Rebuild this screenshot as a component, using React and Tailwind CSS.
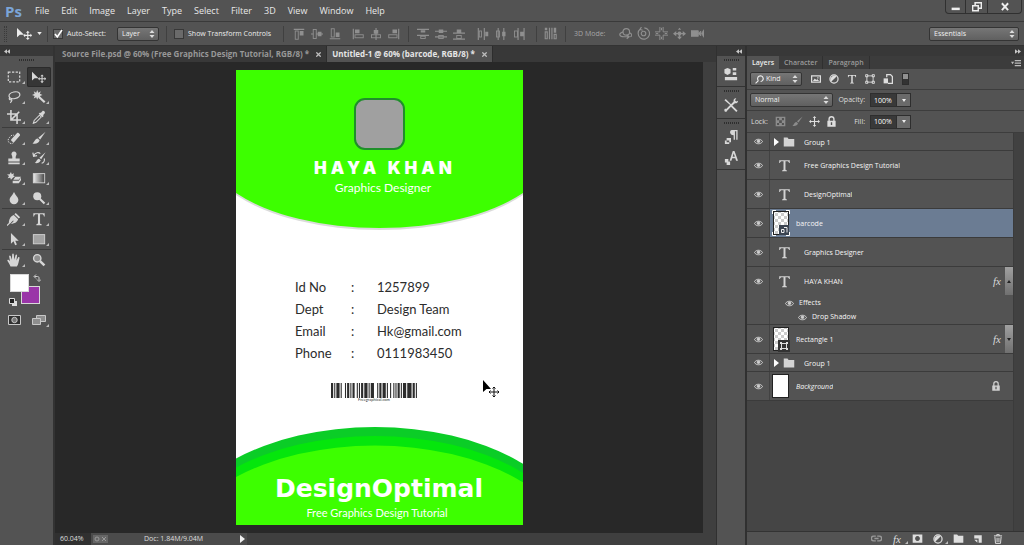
import { clsx } from 'clsx';

const UI_FONT = "font-['Open_Sans','Noto_Sans',sans-serif]";

// ---------- Icons ----------
const Svg = ({ size = 14, className, children }) => (
  <svg viewBox="0 0 16 16" width={size} height={size} fill="currentColor" className={clsx('shrink-0', className)} aria-hidden="true">
    {children}
  </svg>
);

const line = { fill: 'none', stroke: 'currentColor', strokeWidth: 1.4 };

const toolIcons = {
  marquee: <rect x="1.500" y="2.500" width="13" height="11" {...line} strokeDasharray="2.6 1.6" />,
  move: (
    <>
      <path d="M0 2v10l3-2.600h4.500z" />
      <path d="M11.500 5l2 2.200h-1.400v2.200h2.200V8l1.900 2-1.900 2v-1.400h-2.200v2.200h1.400l-2 2.200-2-2.200h1.400v-2.200H8.700V12l-1.900-2 1.900-2v1.400h2.200V7.200H9.500z" />
    </>
  ),
  lasso: (
    <>
      <ellipse cx="8.500" cy="6" rx="6.300" ry="3.800" {...line} transform="rotate(-12 8.500 6)" />
      <path d="M3.500 8.500c-1.600 1.200-1 3 .8 2.600s1.600 1.600-.6 3.400" {...line} />
    </>
  ),
  wand: (
    <>
      <path d="M6 0l1.200 3L10 1.500 9 4.400l3 1.200-3 1.200 1 2.800-2.800-1.400L6 11 4.800 8.200 2 9.600l1-2.800L0 5.600l3-1.200L2 1.500 4.800 3z" />
      <path d="M8 8l6.500 6" stroke="currentColor" strokeWidth="2.600" />
    </>
  ),
  crop: <path d="M4.500 0v11.500H16M0 4.500h11.500V16M5 11L14 2" {...line} strokeWidth="1.800" />,
  dropper: (
    <>
      <path d="M10 3.500l1.800-2.200c1-1.300 3.800.8 2.800 2.400L12.600 6l.8.900-1.500 1.400L7.700 4.200 9.200 2.800z" />
      <path d="M8.500 6l2 2-6 6-3 1.200L2.500 12z" {...line} strokeWidth="1.200" />
    </>
  ),
  heal: (
    <>
      <path d="M5 9.500l6.500-7.300c1-1.200 4.300 1.700 3.300 3L8.300 12.500c-1.200 1.200-4.500-1.500-3.300-3z" />
      <path d="M7.600 13.200C4 16.500-.5 12 2 8.500S6 4 8 5" {...line} strokeWidth="1.100" strokeDasharray="1.600 1.300" />
    </>
  ),
  brush: (
    <>
      <path d="M15.500.8L9.400 9.600 7.300 7.800z" />
      <path d="M6.500 8.600l2.200 2C8 14 4.500 15 .5 14.200 2.800 13.200 3 9 6.500 8.600z" />
    </>
  ),
  stamp: <path d="M8 .5a3 3 0 0 1 2.700 4.200C9.800 6.400 9.800 7.500 10 8.500h4.500V12h-13V8.500H6c.2-1 .2-2.100-.7-3.800A3 3 0 0 1 8 .500zM1.500 13h13v2h-13z" />,
  history: (
    <>
      <path d="M15.500 1.500l-5 7.800-2-1.600zM8 8.800l2 1.800c-1 3-4 3.800-7 3.200 2-1 2.400-4.600 5-5z" />
      <path d="M2 5.500C4 1 8 1.500 9.500 3M1 1.800l.8 4.200 4-.8M14 8.500c1 3-1 5.200-3 5.500" {...line} />
    </>
  ),
  eraser: (
    <>
      <path d="M4.500 1l1 2.600L8 2.500 7.200 5 9 6 7 7.400 4.500 10 3.700 7.600.8 8.200 2.300 5.700 0 4l3-.2z" />
      <path d="M9.500 6.500H16L13.500 10H7.200zM6.500 11h7L16 7.500v3.200L13.500 14h-7z" />
    </>
  ),
  blur: <path d="M8 1c1.500 3.500 5 6 5 9.300a5 4.800 0 0 1-10 0C3 7 6.500 4.500 8 1z" />,
  dodge: (
    <>
      <circle cx="6" cy="6" r="4.600" />
      <path d="M8.800 8.800l5.500 5.500" stroke="currentColor" strokeWidth="2.400" />
    </>
  ),
  pen: (
    <>
      <path d="M10 1l5 5-1.600 1.500-5-5zM7.700 3.300l5 5c-1 3.200-3.200 4.700-8.200 5.400l3.200-3.300-.8-.8L3.500 13 2 12c.6-4.800 2.500-7.500 5.700-8.700z" />
      <path d="M0 15.500l4-4" {...line} />
    </>
  ),
  type: <path d="M1.500 1.500h13V5h-.9c-.3-1.700-1-2.300-2.600-2.300H9.200v10c0 1 .5 1.300 1.800 1.300v1H5v-1c1.300 0 1.800-.3 1.800-1.300v-10H5C3.400 2.700 2.700 3.300 2.400 5h-.9z" />,
  path: <path d="M4.500 1v12.500l3-2.800 1.800 4.500 2-.8-1.900-4.400h4z" />,
  shape: <rect x="1.500" y="3" width="13" height="10.500" fill="#a3a3a3" stroke="currentColor" />,
  hand: <path d="M4 15.500C3 12.500 1 10.500.3 8.400c.3-1.200 1.500-1 3.200 1L2.400 3.800c.2-1.200 1.500-1.200 1.900 0l1.300 4 .3-6.200c.3-1.300 1.700-1.300 1.900 0l.5 6 1.500-5.400c.5-1 1.700-.7 1.700.4l-.7 5.900 2-3.600c.8-.8 1.700-.1 1.500.8-.7 3.500-1.200 7-3 9.800z" />,
  zoom: (
    <>
      <circle cx="6" cy="6" r="4.200" fill="#8f8f8f" stroke="currentColor" strokeWidth="1.600" />
      <path d="M9.200 9.200l5 5" stroke="currentColor" strokeWidth="2.800" />
    </>
  ),
};

const GradientIcon = () => (
  <Svg size={14}>
    <defs>
      <linearGradient id="tool-gradient">
        <stop offset="0" stopColor="#eeeeee" />
        <stop offset="1" stopColor="#444444" />
      </linearGradient>
    </defs>
    <rect x="1.500" y="3" width="13" height="10.500" fill="url(#tool-gradient)" stroke="currentColor" />
  </Svg>
);

const UpDown = () => (
  <svg viewBox="0 0 6 8" width="6" height="8" fill="currentColor" className="pointer-events-none absolute top-1/2 right-1 -translate-y-1/2" aria-hidden="true">
    <path d="M3 0l2.500 3h-5zM3 8L.5 5h5z" />
  </svg>
);

const MoreMark = ({ className }) => (
  <svg viewBox="0 0 3 3" width="3" height="3" className={clsx('absolute', className)} fill="#bbbbbb" aria-hidden="true">
    <path d="M3 0v3H0z" />
  </svg>
);

const EyeIcon = () => (
  <svg viewBox="0 0 18 12" width="9" height="7" className="shrink-0 text-[#d0d0d0]" fill="none" stroke="currentColor" strokeWidth="2" aria-hidden="true">
    <path d="M1 6c3-6 13-6 16 0-3 6-13 6-16 0z" />
    <circle cx="9" cy="5.500" r="2.600" fill="currentColor" />
  </svg>
);

const FolderIcon = ({ size = 12 }) => (
  <Svg size={size}>
    <path d="M1 2h5l1.500 2H15v10H1z" />
  </Svg>
);

const LockIcon = ({ size = 10 }) => (
  <Svg size={size}>
    <path d="M4.500 8V4.500a3.500 3.500 0 0 1 7 0V8" fill="none" stroke="currentColor" strokeWidth="2" />
    <path fillRule="evenodd" d="M2 7h12v8.500H2zM7 9v4h2V9z" />
  </Svg>
);

const FxIcon = ({ className }) => (
  <span className={clsx("font-['Liberation_Serif',serif] text-[11px] leading-3 italic", className)}>fx</span>
);

// ---------- Shared controls ----------
const Select = ({ label, value, className, selectClass }) => (
  <span className={clsx('relative block text-[#dcdcdc]', className)}>
    <select
      aria-label={label}
      defaultValue={value}
      className={clsx(
        'block h-[14px] w-full appearance-none rounded-xs border border-[#343434] bg-linear-to-b from-[#767676] to-[#606060] pr-3 text-[7px] leading-3 font-medium text-[#f0f0f0] outline-none',
        selectClass
      )}
    >
      <option>{value}</option>
    </select>
    <UpDown />
  </span>
);

const Checkbox = ({ id, label, checked }) => (
  <span className="flex items-center gap-1">
    <span className="relative block h-[10px] w-[10px]">
      <input
        id={id}
        type="checkbox"
        defaultChecked={checked}
        className="peer block h-[10px] w-[10px] appearance-none border border-[#383838] bg-[#6a6a6a]"
      />
      <svg viewBox="0 0 10 10" className="pointer-events-none absolute inset-0 hidden text-white peer-checked:block" fill="none" stroke="currentColor" strokeWidth="1.600">
        <path d="M2 5l2.300 3L9 1" />
      </svg>
    </span>
    <label htmlFor={id} className="text-[7px] leading-3 font-medium whitespace-nowrap">{label}</label>
  </span>
);

const Grip = () => (
  <div className="flex h-[11px] items-start justify-center pt-[3px]">
    <span className="block h-[2px] w-[15px] border-t border-b border-dotted border-[#2e2e2e]" />
  </div>
);

const Separator = () => <span className="h-4 w-px shrink-0 bg-[#404040]" />;

// ---------- Menu bar ----------
const menus = ['File', 'Edit', 'Image', 'Layer', 'Type', 'Select', 'Filter', '3D', 'View', 'Window', 'Help'];

const MenuBar = () => (
  <header className="flex h-[22px] shrink-0 items-center border-b border-[#3a3a3a] bg-[#535353]">
    <span className="ml-[5px] w-[24px] text-[15px] leading-5 font-bold text-[#7ba5d8]">Ps</span>
    <nav className="flex">
      {menus.map((menu) => (
        <button key={menu} className="px-[6px] text-[9px] leading-4 font-medium text-[#e8e8e8]">{menu}</button>
      ))}
    </nav>
    <div className="mr-[2px] ml-auto flex self-start text-[#eeeeee]">
      <button aria-label="Minimize" className="flex h-[14px] w-[21px] items-center justify-center rounded-bl-sm border border-t-0 border-[#303030]">
        <Svg size={10}><path d="M1 9h13v4H1z" /></Svg>
      </button>
      <button aria-label="Restore" className="flex h-[14px] w-[21px] items-center justify-center border-b border-[#303030]">
        <Svg size={10}><path d="M5 5V1h10v9h-4M1 6h9v8H1z" fill="none" stroke="currentColor" strokeWidth="2.400" /></Svg>
      </button>
      <button aria-label="Close" className="flex h-[14px] w-[35px] items-center justify-center rounded-br-sm border border-t-0 border-[#303030]">
        <Svg size={10}><path d="M3 2l10 11M13 2L3 13" stroke="currentColor" strokeWidth="3" /></Svg>
      </button>
    </div>
  </header>
);

// ---------- Options bar ----------
const alignGroups = [
  [
    { name: 'Align top edges', d: 'M1 1h14v1.500H1zM9 4h5v6H9z', box: [3, 4, 4, 11] },
    { name: 'Align vertical centers', d: 'M0 7.300h3v1.500H0zM7 7.300h2v1.500H7zM9 5h5v6H9zM14 7.300h2v1.500h-2z', box: [3, 2, 4, 12] },
    { name: 'Align bottom edges', d: 'M1 13.500h14V15H1zM9 6h5v6H9z', box: [3, 1, 4, 11] },
  ],
  [
    { name: 'Align left edges', d: 'M1 1h1.500v14H1zM4 2h6v5H4z', box: [4, 9, 11, 4] },
    { name: 'Align horizontal centers', d: 'M7.300 0h1.500v16H7.300zM5 2.500h6v5H5z', box: [2, 9, 12, 4] },
    { name: 'Align right edges', d: 'M13.500 1H15v14h-1.500zM6 2h6v5H6z', box: [1, 9, 11, 4] },
  ],
  [
    { name: 'Distribute top edges', d: 'M0 1h16v1.500H0zM0 9h16v1.500H0zM5 3h6v3H5z', box: [5, 11, 6, 3] },
    { name: 'Distribute vertical centers', d: 'M0 3.500h16V5H0zM0 11h16v1.500H0zM5 2h6v4.500H5z', box: [5, 10, 6, 4] },
    { name: 'Distribute bottom edges', d: 'M0 6h16v1.500H0zM0 14h16v1.500H0zM5 2h6v4H5z', box: [5, 10, 6, 4] },
  ],
  [
    { name: 'Distribute left edges', d: 'M1 0h1.500v16H1zM9 0h1.500v16H9zM11 5h4v6h-4z', box: [3, 4, 3, 8] },
    { name: 'Distribute horizontal centers', d: 'M3.500 0H5v16H3.500zM11 0h1.500v16H11zM9.500 5H14v6H9.500z', box: [2, 4, 4, 8] },
    { name: 'Distribute right edges', d: 'M6 0h1.500v16H6zM14 0h1.500v16H14zM9.500 5H14v6H9.500z', box: [2, 4, 4, 8] },
  ],
];

const AlignGroup = ({ items }) => (
  <div className="flex text-[#8f8f8f]">
    {items.map(({ name, d, box: [x, y, width, height] }) => (
      <button key={name} aria-label={name} className="flex w-[18px] justify-center">
        <Svg size={12}>
          <path d={d} />
          <rect x={x} y={y} width={width} height={height} {...line} strokeWidth="1.200" />
        </Svg>
      </button>
    ))}
  </div>
);

const modes3d = [
  {
    name: 'Rotate 3D',
    icon: (
      <>
        <circle cx="9" cy="6" r="4" {...line} />
        <path d="M5 6C-1 8 0 12 6 12h6M9.500 9.500l3 2.500-3 2.500M13 7c4 2 3 4 1 5" {...line} />
      </>
    ),
  },
  {
    name: 'Roll 3D',
    icon: (
      <>
        <circle cx="8" cy="8" r="2.800" {...line} />
        <path d="M4 2.500A7 7 0 1 0 9 1M5.500 0L3.600 3l3.400 1" {...line} />
      </>
    ),
  },
  { name: 'Drag 3D', icon: <path d="M6 0v6H0M10 0v6h6M6 16v-6H0M10 16v-6h6M8 1v3M8 12v3M1 8h3M12 8h3" {...line} strokeWidth="1.200" /> },
  { name: 'Slide 3D', icon: <path d="M8 5.500a2.500 2.500 0 0 1 2.400 1.800H12V5l4 3.200-4 3.200V9h-1.700L9 10.500V12h2l-3 3.500L5 12h2v-1.500L5.700 9H4v2.400L0 8.200 4 5v2.300h1.600A2.500 2.500 0 0 1 8 5.500zM8 1l2 2.500H6z" /> },
  { name: 'Scale 3D', icon: <path d="M0 4.500h9v7H0zM9 8l3-3v6zM16 3l-3 5 3 5" stroke="currentColor" /> },
];

const OptionsBar = () => (
  <div className="flex h-6 shrink-0 items-center border-b border-[#333333] bg-[#535353] text-[#ececec]">
    <span className="ml-1 h-4 w-[3px] border-x border-dotted border-[#3a3a3a]" />
    <button aria-label="Move tool presets" className="ml-[10px] flex items-center gap-[5px]">
      <Svg size={15}>{toolIcons.move}</Svg>
      <svg viewBox="0 0 6 4" width="5" height="3" fill="currentColor"><path d="M0 0h6L3 4z" /></svg>
    </button>
    <span className="ml-[5px] flex"><Separator /></span>
    <div className="ml-[5px] flex w-[64px] items-center"><Checkbox id="auto-select" label="Auto-Select:" checked /></div>
    <Select label="Auto-select target" value="Layer" className="w-[42px]" selectClass="pl-1" />
    <span className="mr-[7px] ml-[7px] flex"><Separator /></span>
    <div className="w-[109px]"><Checkbox id="transform-controls" label="Show Transform Controls" /></div>
    <Separator />
    <div className="ml-[6px] flex gap-[5px]">
      <AlignGroup items={alignGroups[0]} />
      <AlignGroup items={alignGroups[1]} />
    </div>
    <span className="mx-[5px] flex"><Separator /></span>
    <div className="flex gap-[6px]">
      <AlignGroup items={alignGroups[2]} />
      <AlignGroup items={alignGroups[3]} />
    </div>
    <span className="mr-[7px] ml-[8px] flex"><Separator /></span>
    <button aria-label="Auto-align layers" className="text-[#8f8f8f]">
      <Svg size={13}>
        <path d="M1 1h3v3H1zM6 1h1.500v14H6zM12 1h3v6h-3zM9 1h1.500v14H9z" />
        <path d="M1.500 6v8.500H4V6zM12.500 9v5.500H15V9z" {...line} />
      </Svg>
    </button>
    <span className="mr-2 ml-[8px] flex"><Separator /></span>
    <span className="w-[42px] text-[7px] leading-3 font-medium text-[#a5a5a5]">3D Mode:</span>
    <div className="flex text-[#8f8f8f]">
      {modes3d.map((mode) => (
        <button key={mode.name} aria-label={mode.name} className="flex w-[18px] justify-center">
          <Svg size={13}>{mode.icon}</Svg>
        </button>
      ))}
    </div>
    <Select label="Workspace" value="Essentials" className="mr-[5px] ml-auto w-[90px]" selectClass="pl-1" />
  </div>
);

// ---------- Toolbox ----------
const toolGroups = [
  ['marquee', 'move', 'lasso', 'wand', 'crop', 'dropper'],
  ['heal', 'brush', 'stamp', 'history', 'eraser', 'gradient', 'blur', 'dodge'],
  ['pen', 'type', 'path', 'shape'],
  ['hand', 'zoom'],
];

const ToolButton = ({ name, active }) => (
  <button
    aria-label={name}
    className={clsx('relative flex h-5 items-center justify-center text-[#d6d6d6]', active && 'rounded-xs bg-[#363636] shadow-[inset_0_0_0_1px_#2b2b2b]')}
  >
    {name === 'gradient' ? <GradientIcon /> : <Svg size={14}>{toolIcons[name]}</Svg>}
    {!active && name !== 'zoom' && <MoreMark className="right-[2px] bottom-[3px]" />}
  </button>
);

const Toolbox = () => (
  <aside className="flex w-[55px] shrink-0 flex-col border-r-2 border-[#333333] bg-[#535353]">
    <div className="flex h-[10px] items-center bg-[#383838] pl-1">
      <svg viewBox="0 0 8 6" width="6" height="5" fill="#c8c8c8"><path d="M4 0v6L0 3zM8 0v6L4 3z" /></svg>
    </div>
    <Grip />
    <div className="px-[2px]">
      {toolGroups.map((group, i) => (
        <div key={group[0]} className={clsx('grid grid-cols-2', i < 3 && 'border-b border-[#3c3c3c]')}>
          {group.map((name) => (
            <ToolButton key={name} name={name} active={name === 'move'} />
          ))}
        </div>
      ))}
    </div>
    <div className="relative h-10">
      <button aria-label="Background color" className="absolute top-4 left-[21px] h-[18px] w-[19px] border border-[#d8d8d8] bg-[#9a35a8]" />
      <button aria-label="Foreground color" className="absolute top-1 left-[10px] h-[18px] w-[19px] border border-[#d8d8d8] bg-white" />
      <button aria-label="Switch colors" className="absolute top-1 left-[33px] text-[#cfcfcf]">
        <Svg size={8}><path d="M3 5h6c2 0 3 1 3 3v5M6 1L2 5l4 4M8 11l4 4 4-4" {...line} strokeWidth="2" /></Svg>
      </button>
      <button aria-label="Default colors" className="absolute top-[28px] left-[9px]">
        <svg viewBox="0 0 8 8" width="8" height="8"><path d="M3 3h5v5H3z" fill="#ddd" /><path d="M.5.500h5v5h-5z" fill="#222" stroke="#ddd" /></svg>
      </button>
    </div>
    <div className="grid grid-cols-2 px-[2px] text-[#c8c8c8]">
      <button aria-label="Quick mask" className="flex h-5 items-center justify-center">
        <svg viewBox="0 0 13 10" width="13" height="10"><path d="M.5.500h12v9H.5z" fill="#303030" stroke="currentColor" /><circle cx="6.500" cy="5" r="2.700" fill="#777" stroke="currentColor" /></svg>
      </button>
      <button aria-label="Screen mode" className="relative flex h-5 items-center justify-center">
        <svg viewBox="0 0 14 10" width="14" height="10" fill="#8e8e8e" stroke="currentColor"><path d="M4.500.500h9v6h-9z" /><path d="M.5 3.500h8v6h-8z" /></svg>
        <MoreMark className="right-[2px] bottom-[3px]" />
      </button>
    </div>
  </aside>
);

// ---------- Document ----------
const documents = [
  { title: 'Source File.psd @ 60% (Free Graphics Design Tutorial, RGB/8) *' },
  { title: 'Untitled-1 @ 60% (barcode, RGB/8) *', active: true },
];

const details = [
  ['Id No', '1257899'],
  ['Dept', 'Design Team'],
  ['Email', 'Hk@gmail.com'],
  ['Phone', '0111983450'],
];

// bar widths and the gap that follows each one
const bars = [2, 1, 1, 1, 3, 1, 1, 3, 1, 1, 2, 1, 1, 1, 2, 2, 1, 1, 1, 1, 2, 1, 3, 1, 1, 1, 3, 3, 1, 1, 2, 1, 3, 1, 1, 2, 1, 2, 1, 1, 1, 1, 2, 1, 1, 1, 3, 1, 4, 1, 2, 1, 1, 1];

const Barcode = () => {
  let x = 0;
  const rects = [];
  bars.forEach((w, i) => {
    if (i % 2 === 0) rects.push(<rect key={x} x={x} width={w} height="15" />);
    x += w;
  });
  return (
    <svg viewBox={`0 0 ${x} 15`} preserveAspectRatio="none" className="block h-[15px] w-[87px]" fill="#2c2c2c" aria-label="Barcode">
      {rects}
    </svg>
  );
};

const IdCard = () => (
  <article className="relative h-[455px] w-[287px] shrink-0 overflow-hidden bg-white font-['Lato',sans-serif]">
    <svg viewBox="0 0 287 455" className="absolute inset-0 h-full w-full" aria-hidden="true">
      <path d="M0 0h287v124A175 82 0 0 1 0 124z" fill="#888888" opacity="0.300" transform="translate(0 1)" />
      <path d="M0 0h287v123A175 82 0 0 1 0 123z" fill="#3dff00" />
      <ellipse cx="139" cy="469.500" rx="200" ry="112.500" fill="#0bcd27" />
      <ellipse cx="139" cy="478.500" rx="200" ry="112.500" fill="#05e60c" />
      <ellipse cx="139" cy="488" rx="200" ry="112.500" fill="#3dff00" />
    </svg>
    <div className="relative flex h-full flex-col items-center text-white">
      <div className="mt-[28px] h-[52px] w-[51px] rounded-[11px] border-2 border-[#1f8f2b] bg-[#a0a0a0]" />
      <h1 className="mt-2 pl-3 font-['Inter',sans-serif] text-[17px] leading-5 font-black tracking-[4px]">HAYA KHAN</h1>
      <p className="pl-2 text-[12px] leading-5">Graphics Designer</p>
      <table className="mt-[78px] ml-1 text-left text-[13px] leading-[22px] text-[#2c2c2c]">
        <tbody>
          {details.map(([label, value]) => (
            <tr key={label}>
              <th className="w-[56px] p-0 font-normal">{label}</th>
              <td className="w-[26px] p-0">:</td>
              <td className="w-[90px] p-0">{value}</td>
            </tr>
          ))}
        </tbody>
      </table>
      <div className="mt-[19px] mr-[10px] flex flex-col items-center text-[#333333]">
        <Barcode />
        <span className="text-[4px] leading-1">Freegraphical.com</span>
      </div>
      <h2 className="mt-auto font-['DejaVu_Sans',sans-serif] text-[25px] leading-8 font-bold">DesignOptimal</h2>
      <p className="mb-1 pr-1 text-[11px] leading-4">Free Graphics Design Tutorial</p>
    </div>
    <svg viewBox="0 0 16 20" width="16" height="20" className="absolute top-[309px] left-[247px]" aria-hidden="true">
      <path d="M0 1v12l3.500-3H8z" />
      <path d="M11 8v10M6 13h10M9.500 9.500L11 8l1.500 1.500M9.500 16.500L11 18l1.500-1.500M7.500 11.500L6 13l1.500 1.500M14.500 11.500L16 13l-1.500 1.500" fill="none" stroke="#111" />
    </svg>
  </article>
);

const DocumentArea = () => (
  <main className="flex min-w-0 flex-1 flex-col bg-[#282828]">
    <div className="flex h-4 shrink-0 bg-[#383838]">
      {documents.map((doc) => (
        <div
          key={doc.title}
          className={clsx(
            'flex items-center gap-[7px] border-r border-[#2d2d2d] pr-[5px] text-[8px] font-bold',
            doc.active ? 'bg-[#535353] pl-[5px] text-[#e6e6e6]' : 'pl-[7px] text-[#979797]'
          )}
        >
          <button className="leading-4 whitespace-nowrap">{doc.title}</button>
          <button aria-label={`Close ${doc.title}`} className="text-[#bdbdbd]">
            <Svg size={5}><path d="M1 1l14 14M15 1L1 15" stroke="currentColor" strokeWidth="4" /></Svg>
          </button>
        </div>
      ))}
    </div>
    <div className="flex min-h-0 flex-1">
      <div className="flex min-w-0 flex-1 items-center justify-center overflow-hidden">
        <IdCard />
      </div>
      <div className="w-[13px] shrink-0 bg-[#3f3f3f]" />
    </div>
    <footer className="flex h-3 shrink-0 items-center bg-[#3f3f3f] text-[7px] text-[#dedede]">
      <span className="w-[36px] self-stretch bg-[#303030] pl-[5px] leading-3">60.04%</span>
      <div className="flex w-[156px] items-center self-stretch bg-[#4b4b4b] pl-[2px]">
        <svg viewBox="0 0 15 8" width="15" height="8" fill="none" stroke="#999"><path d="M0 0h15v8H0z" fill="#666" stroke="none" /><circle cx="4" cy="4" r="2" /><path d="M9 2l4 4M13 2L9 6" /></svg>
        <span className="ml-[36px] leading-3">Doc: 1.84M/9.04M</span>
        <button aria-label="Document info" className="mr-[2px] ml-auto">
          <svg viewBox="0 0 5 8" width="5" height="8" fill="#f0f0f0"><path d="M0 0l5 4-5 4z" /></svg>
        </button>
      </div>
    </footer>
  </main>
);

// ---------- Collapsed dock ----------
const dockGroups = [
  {
    height: 'h-[31px]',
    icons: [{ name: 'Properties', d: 'M4 1l3.500 1.500v4.500L4 9 .5 7V2.500zM10 1h4v3h-4zM10 6h4v3h-4zM1 11.500h14v3.500H1z' }],
  },
  {
    height: 'h-[32px]',
    icons: [{ name: 'Tool presets', d: 'M2 1l6 6 3-3c-.5-2 1-4 3-3.500l-1.500 2 1.500 1.500 2-1c0 2.500-2 3.500-3.500 3L9.500 8.500l6 6L14 16 8 10l-4.500 4.500c0 1.500-2.500 2-3 0s1-2.500 2-2L7 8 .5 2.500z' }],
  },
  {
    height: 'h-[51px]',
    icons: [
      { name: 'Paragraph styles', d: 'M9 0h6.500v11H14V1.500h-1.500V11H11V6C6 6 6 0 9 0zM3 9h5v5H3zM1 12h5v4H1z' },
      { name: 'Character styles', d: 'M10 0h2l4 11h-2.200l-.9-2.700H9.400L8.500 11H6.400zM9.900 6.600h2.500L11.100 2.700zM1 9h4v3h2v4H3v-3H1z' },
    ],
  },
];

const Dock = () => (
  <aside className="flex w-[31px] shrink-0 flex-col border-r-2 border-l-1 border-[#303030] bg-[#535353]">
    <div className="flex h-[10px] items-center justify-end bg-[#383838] pr-[3px]">
      <svg viewBox="0 0 8 6" width="6" height="5" fill="#c8c8c8"><path d="M4 0v6L0 3zM8 0v6L4 3z" /></svg>
    </div>
    {dockGroups.map((group) => (
      <div key={group.icons[0].name} className={clsx('border-b border-[#333333]', group.height)}>
        <div className="-mb-1"><Grip /></div>
        {group.icons.map((icon) => (
          <button key={icon.name} aria-label={icon.name} className="flex h-[21px] w-full items-center justify-center text-[#d8d8d8]">
            <Svg size={14}><path fillRule="evenodd" d={icon.d} /></Svg>
          </button>
        ))}
      </div>
    ))}
  </aside>
);

// ---------- Layers panel ----------
const filterIcons = [
  { name: 'Pixel layers', icon: <path fillRule="evenodd" d="M0 2h16v12H0zM2 4v8h12V4zM3 11l3-4 2.500 2.500L10 8l3 3zM10 5h2v2h-2z" /> },
  { name: 'Adjustment layers', icon: <><circle cx="8" cy="8" r="6.500" {...line} strokeWidth="2" /><path d="M12.500 3.500A6.500 6.500 0 0 0 3.500 12.500z" /></> },
  { name: 'Type layers', icon: toolIcons.type },
  { name: 'Shape layers', icon: <path d="M3 3h10v10H3zM1 1h3.500v3.500H1zM11.500 1H15v3.500h-3.500zM1 11.500h3.500V15H1zM11.500 11.500H15V15h-3.500z" {...line} /> },
  { name: 'Smart objects', icon: <><path d="M6 5V1h6l3 3v11H8" {...line} strokeWidth="2" /><path d="M1 7h7v8H1z" /></> },
];

const lockIcons = [
  { name: 'Lock transparent pixels', dim: true, icon: <path fillRule="evenodd" d="M1 1h14v14H1zM3 3v3h3V3zM10 3v3h3V3zM6 6v4h4V6zM3 10v3h3v-3zM10 10v3h3v-3z" /> },
  { name: 'Lock image pixels', dim: true, icon: toolIcons.brush },
  { name: 'Lock position', icon: <path d="M8 0l2.500 3H8.800v4.200H13V5.500L16 8l-3 2.500V8.800H8.800V13h1.700L8 16l-2.500-3h1.700V8.800H3v1.700L0 8l3-2.500v1.700h4.200V3H5.500z" /> },
];

const layers = [
  { name: 'Group 1', kind: 'group' },
  { name: 'Free Graphics Design Tutorial', kind: 'type' },
  { name: 'DesignOptimal', kind: 'type' },
  { name: 'barcode', kind: 'smart', selected: true },
  { name: 'Graphics Designer', kind: 'type' },
  { name: 'HAYA KHAN', kind: 'type', fx: 'open', effects: ['Drop Shadow'] },
  { name: 'Rectangle 1', kind: 'shape', fx: 'closed' },
  { name: 'Group 1', kind: 'group' },
  { name: 'Background', kind: 'background', locked: true },
];

const Thumbnail = ({ kind }) => {
  if (kind === 'background') return <span className="block h-[24px] w-[17px] border border-[#222222] bg-white" />;
  return (
    <svg viewBox="0 0 18 26" width="18" height="26" aria-hidden="true">
      <defs>
        <pattern id="checker" width="6" height="6" patternUnits="userSpaceOnUse">
          <path d="M0 0h6v6H0z" fill="#ffffff" />
          <path d="M0 0h3v3H0zM3 3h3v3H3z" fill="#cccccc" />
        </pattern>
      </defs>
      {kind === 'smart' && <path d="M.5 4V.500H4M14 .5h3.500V4M.5 22v3.500H4M14 25.500h3.500V22" fill="none" stroke="#ffffff" />}
      <rect x="1.500" y="1.500" width="15" height="23" fill="url(#checker)" stroke="#222222" />
      {kind === 'smart' ? (
        <>
          <path d="M7 15h10v10H7z" fill="#3a4350" />
          <path d="M9.500 22.500v-3H12v3zM12 17.500h3v5" fill="none" stroke="#eeeeee" />
        </>
      ) : (
        <>
          <path d="M6 14h12v12H6z" fill="#333333" />
          <path d="M9.500 17.500h5v5h-5z" fill="none" stroke="#dddddd" />
          <path d="M8 16h2v2H8zM14 16h2v2h-2zM8 22h2v2H8zM14 22h2v2h-2z" fill="#dddddd" />
        </>
      )}
    </svg>
  );
};

const LayerIcon = ({ kind }) => {
  if (kind === 'group') {
    return (
      <span className="flex w-[34px] items-center gap-[4px] pl-[4px] text-[#d4d4d4]">
        <svg viewBox="0 0 5 8" width="5" height="8" fill="#ffffff"><path d="M0 0l5 4-5 4z" /></svg>
        <FolderIcon />
      </span>
    );
  }
  if (kind === 'type') {
    return (
      <span className="flex w-[34px] pl-[8px] text-[#d4d4d4]">
        <Svg size={13}>{toolIcons.type}</Svg>
      </span>
    );
  }
  return <span className="flex w-[26px] justify-start pl-[2px]"><Thumbnail kind={kind} /></span>;
};

const LayerRow = ({ layer }) => (
  <li className="border-b border-[#3b3b3b]">
    <div className={clsx('flex items-stretch', layer.kind === 'group' ? 'h-[17px]' : 'h-[28px]')}>
      <button aria-label={`Toggle ${layer.name}`} className="flex w-[23px] shrink-0 items-center justify-center border-r border-[#424242]">
        <EyeIcon />
      </button>
      <div className={clsx('flex min-w-0 flex-1 items-center', layer.selected && 'bg-[#6b7c93]')}>
        <LayerIcon kind={layer.kind} />
        <span className={clsx('truncate pt-[2px] text-[7px] leading-3 font-medium text-[#f5f5f5]', layer.locked && 'italic')}>{layer.name}</span>
        {layer.locked && <span className="mr-[12px] ml-auto text-[#cfcfcf]"><LockIcon /></span>}
        {layer.fx && (
          <span className="ml-auto flex items-center self-stretch">
            <FxIcon className="mr-[4px] text-[#d8d8d8]" />
            <button aria-label="Toggle effects" className="flex w-2 items-center justify-center self-stretch bg-linear-to-b from-[#a0a0a0] to-[#707070]">
              <svg viewBox="0 0 4 3" width="4" height="3" fill="#222222"><path d={layer.fx === 'open' ? 'M2 0l2 3H0z' : 'M0 0h4L2 3z'} /></svg>
            </button>
          </span>
        )}
      </div>
    </div>
    {layer.effects && (
      <div className="flex h-[29px] text-[7px] font-medium text-[#f5f5f5]">
        <span className="w-[23px] shrink-0 border-r border-[#424242]" />
        <div className="pt-px pl-[15px]">
          <div className="flex h-[14px] items-center gap-[5px]"><EyeIcon />Effects</div>
          {layer.effects.map((effect) => (
            <div key={effect} className="flex h-[14px] items-center gap-[5px] pl-[13px]"><EyeIcon />{effect}</div>
          ))}
        </div>
      </div>
    )}
  </li>
);

const PercentField = ({ id, label }) => (
  <div className="flex items-center">
    <label htmlFor={id} className="w-[33px] pr-[5px] text-right text-[7px] leading-3 font-medium">{label}</label>
    <input id={id} defaultValue="100%" className="h-[14px] w-[27px] border border-[#2e2e2e] bg-[#393939] px-[3px] text-[7px] leading-3 font-medium text-white outline-none" />
    <button aria-label={`${label} slider`} className="flex h-[14px] w-[14px] items-center justify-center border border-l-0 border-[#2e2e2e] bg-[#6a6a6a]">
      <svg viewBox="0 0 4 3" width="4" height="3" fill="#eeeeee"><path d="M0 0h4L2 3z" /></svg>
    </button>
  </div>
);

const LayersPanel = () => (
  <section className="flex w-[277px] shrink-0 flex-col bg-[#535353] text-[#dedede]">
    <div className="flex h-[10px] shrink-0 items-center justify-end bg-[#383838] pr-[3px]">
      <svg viewBox="0 0 8 6" width="6" height="5" fill="#c8c8c8"><path d="M0 0v6l4-3zM4 0v6l4-3z" /></svg>
    </div>
    <div className="flex h-[13px] shrink-0 bg-[#3c3c3c] text-[7px] leading-[13px] font-semibold">
      <button className="bg-[#535353] px-[5px] text-[#ececec]">Layers</button>
      <button className="border-r border-[#303030] px-[5px] text-[#9a9a9a]">Character</button>
      <button className="border-r border-[#303030] px-[5px] text-[#9a9a9a]">Paragraph</button>
      <button aria-label="Panel menu" className="mr-[3px] ml-auto text-[#bbbbbb]">
        <Svg size={10}><path d="M0 6h5L2.500 10zM6 3h10v2H6zM6 7h10v2H6zM6 11h10v2H6z" /></Svg>
      </button>
    </div>

    <div className="flex h-[21px] shrink-0 items-center border-b border-[#3d3d3d] pl-[3px]">
      <span className="relative">
        <Select label="Filter kind" value="Kind" className="w-[52px]" selectClass="pl-[15px]" />
        <Svg size={9} className="pointer-events-none absolute top-[3px] left-[5px] text-[#eeeeee]">
          <path d="M6 10a5 5 0 1 1 4 1.500M6 10l-5 5" fill="none" stroke="currentColor" strokeWidth="2" />
        </Svg>
      </span>
      <div className="ml-[5px] flex">
        {filterIcons.map(({ name, icon }) => (
          <button key={name} aria-label={name} className="flex w-[18px] justify-center">
            <Svg size={10}>{icon}</Svg>
          </button>
        ))}
      </div>
      <button aria-label="Toggle filtering" className="ml-[5px] h-[12px] w-[7px] border border-[#2d2d2d] bg-linear-to-b from-[#909090] from-50% to-[#333333] to-50%" />
    </div>

    <div className="flex h-[21px] shrink-0 items-center border-b border-[#3d3d3d] pl-[3px]">
      <Select label="Blend mode" value="Normal" className="w-[83px]" selectClass="pl-1" />
      <div className="ml-1"><PercentField id="opacity" label="Opacity:" /></div>
    </div>

    <div className="flex h-[22px] shrink-0 items-center border-b border-[#3d3d3d] pl-[4px]">
      <span className="w-[21px] text-[7px] leading-3 font-medium">Lock:</span>
      <div className="flex">
        {lockIcons.map(({ name, icon, dim }) => (
          <button key={name} aria-label={name} className={clsx('flex w-[17px] justify-center', dim && 'text-[#8c8c8c]')}>
            <Svg size={11}>{icon}</Svg>
          </button>
        ))}
        <button aria-label="Lock all" className="flex w-[17px] justify-center"><LockIcon size={11} /></button>
      </div>
      <div className="-ml-[3px]"><PercentField id="fill" label="Fill:" /></div>
    </div>

    <div className="flex min-h-0 flex-1 bg-[#454545]">
      <ul className="min-w-0 flex-1 self-start bg-[#535353]">
        {layers.map((layer, i) => (
          <LayerRow key={i} layer={layer} />
        ))}
      </ul>
      <div className="w-[11px] shrink-0 border-l border-[#3b3b3b] bg-[#414141]" />
    </div>

    <footer className="flex h-[14px] shrink-0 items-center border-t border-[#333333] pl-[119px]">
      <button aria-label="Link layers" className="flex w-5 justify-center text-[#999999]">
        <Svg size={11}><path d="M7 4.500H4a3.500 3.500 0 0 0 0 7h3M9 4.500h3a3.500 3.500 0 0 1 0 7H9M5 8h6" {...line} strokeWidth="2" /></Svg>
      </button>
      <button aria-label="Layer style" className="relative flex w-[22px] justify-center">
        <FxIcon />
        <MoreMark className="right-0 bottom-px" />
      </button>
      <button aria-label="Add mask" className="flex w-[19px] justify-center">
        <Svg size={11}><path fillRule="evenodd" d="M1 2h14v12H1zM8 4.500a3.500 3.500 0 1 0 .01 0z" /></Svg>
      </button>
      <button aria-label="New adjustment layer" className="relative flex w-[21px] justify-center">
        <Svg size={10}>{filterIcons[1].icon}</Svg>
        <MoreMark className="right-0 bottom-0" />
      </button>
      <button aria-label="New group" className="flex w-5 justify-center"><FolderIcon size={11} /></button>
      <button aria-label="New layer" className="flex w-5 justify-center">
        <Svg size={10}><path d="M2 2h12v12h-5V7H2zM2 9h5v5z" /></Svg>
      </button>
      <button aria-label="Delete layer" className="flex w-5 justify-center">
        <Svg size={10}><path d="M1.500 3h13M6 3V1h4v2M3 4.500l1 10.500h8l1-10.500M6.500 6v7M9.500 6v7" {...line} strokeWidth="1.600" /></Svg>
      </button>
    </footer>
  </section>
);

export default function App() {
  return (
    <div className={clsx('flex h-screen min-w-[900px] flex-col overflow-hidden bg-[#282828]', UI_FONT)}>
      <MenuBar />
      <OptionsBar />
      <div className="flex min-h-0 flex-1">
        <Toolbox />
        <DocumentArea />
        <Dock />
        <LayersPanel />
      </div>
    </div>
  );
}
